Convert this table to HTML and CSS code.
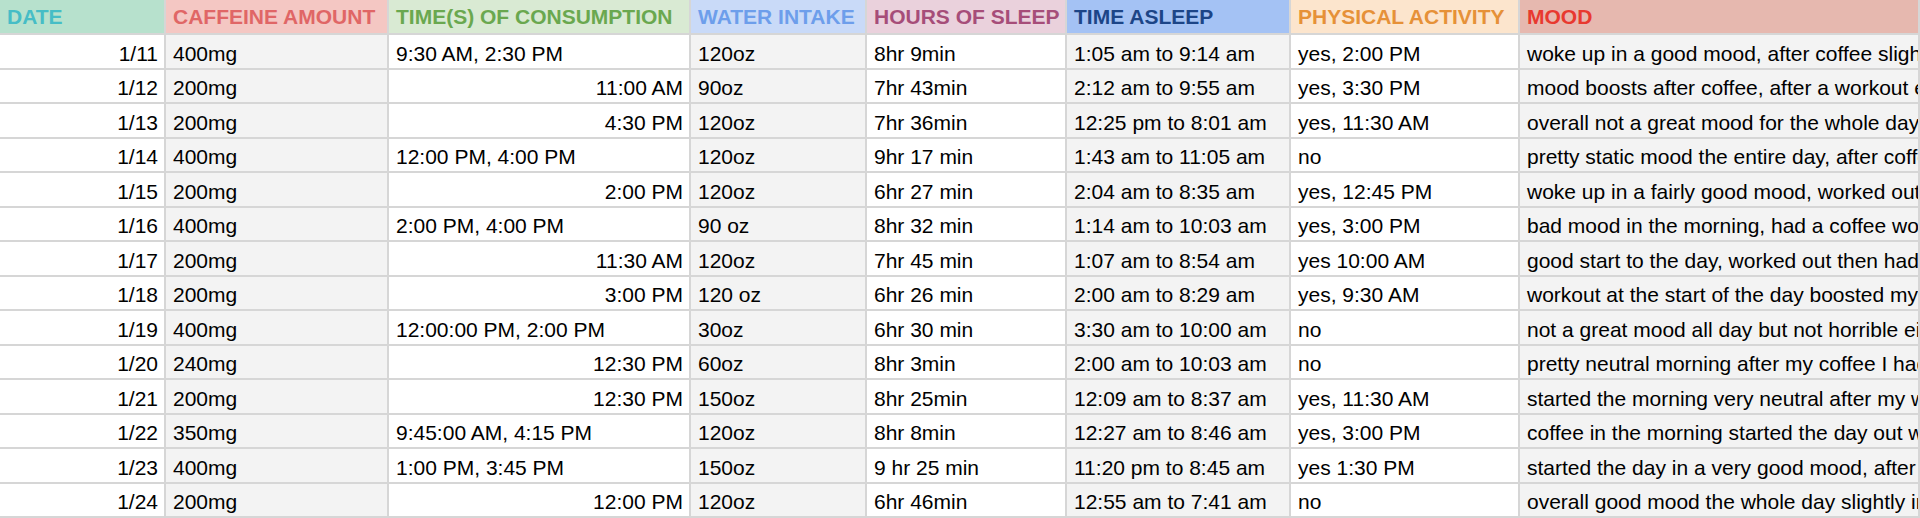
FILE: index.html
```html
<!DOCTYPE html>
<html lang="en">
<head>
<meta charset="utf-8">
<title>Caffeine Log</title>
<link rel="stylesheet" href="styles.css">
</head>
<body>
<div class="sheet">
  <div class="hd h-date">DATE</div>
  <div class="hd h-caf">CAFFEINE AMOUNT</div>
  <div class="hd h-time">TIME(S) OF CONSUMPTION</div>
  <div class="hd h-water">WATER INTAKE</div>
  <div class="hd h-hours">HOURS OF SLEEP</div>
  <div class="hd h-asleep">TIME ASLEEP</div>
  <div class="hd h-phys">PHYSICAL ACTIVITY</div>
  <div class="hd h-mood">MOOD</div>

  <div class="c r">1/11</div><div class="c g">400mg</div><div class="c">9:30 AM, 2:30 PM</div><div class="c g">120oz</div><div class="c">8hr 9min</div><div class="c g">1:05 am to 9:14 am</div><div class="c">yes, 2:00 PM</div><div class="c g">woke up in a good mood, after coffee slightly more energized</div>
  <div class="c r">1/12</div><div class="c g">200mg</div><div class="c r">11:00 AM</div><div class="c g">90oz</div><div class="c">7hr 43min</div><div class="c g">2:12 am to 9:55 am</div><div class="c">yes, 3:30 PM</div><div class="c g">mood boosts after coffee, after a workout even better</div>
  <div class="c r">1/13</div><div class="c g">200mg</div><div class="c r">4:30 PM</div><div class="c g">120oz</div><div class="c">7hr 36min</div><div class="c g">12:25 pm to 8:01 am</div><div class="c">yes, 11:30 AM</div><div class="c g">overall not a great mood for the whole day</div>
  <div class="c r">1/14</div><div class="c g">400mg</div><div class="c">12:00 PM, 4:00 PM</div><div class="c g">120oz</div><div class="c">9hr 17 min</div><div class="c g">1:43 am to 11:05 am</div><div class="c">no</div><div class="c g">pretty static mood the entire day, after coffee slightly better</div>
  <div class="c r">1/15</div><div class="c g">200mg</div><div class="c r">2:00 PM</div><div class="c g">120oz</div><div class="c">6hr 27 min</div><div class="c g">2:04 am to 8:35 am</div><div class="c">yes, 12:45 PM</div><div class="c g">woke up in a fairly good mood, worked out and felt better</div>
  <div class="c r">1/16</div><div class="c g">400mg</div><div class="c">2:00 PM, 4:00 PM</div><div class="c g">90 oz</div><div class="c">8hr 32 min</div><div class="c g">1:14 am to 10:03 am</div><div class="c">yes, 3:00 PM</div><div class="c g">bad mood in the morning, had a coffee worked out and felt better</div>
  <div class="c r">1/17</div><div class="c g">200mg</div><div class="c r">11:30 AM</div><div class="c g">120oz</div><div class="c">7hr 45 min</div><div class="c g">1:07 am to 8:54 am</div><div class="c">yes 10:00 AM</div><div class="c g">good start to the day, worked out then had a coffee</div>
  <div class="c r">1/18</div><div class="c g">200mg</div><div class="c r">3:00 PM</div><div class="c g">120 oz</div><div class="c">6hr 26 min</div><div class="c g">2:00 am to 8:29 am</div><div class="c">yes, 9:30 AM</div><div class="c g">workout at the start of the day boosted my mood</div>
  <div class="c r">1/19</div><div class="c g">400mg</div><div class="c">12:00:00 PM, 2:00 PM</div><div class="c g">30oz</div><div class="c">6hr 30 min</div><div class="c g">3:30 am to 10:00 am</div><div class="c">no</div><div class="c g">not a great mood all day but not horrible either</div>
  <div class="c r">1/20</div><div class="c g">240mg</div><div class="c r">12:30 PM</div><div class="c g">60oz</div><div class="c">8hr 3min</div><div class="c g">2:00 am to 10:03 am</div><div class="c">no</div><div class="c g">pretty neutral morning after my coffee I had more energy</div>
  <div class="c r">1/21</div><div class="c g">200mg</div><div class="c r">12:30 PM</div><div class="c g">150oz</div><div class="c">8hr 25min</div><div class="c g">12:09 am to 8:37 am</div><div class="c">yes, 11:30 AM</div><div class="c g">started the morning very neutral after my workout felt better</div>
  <div class="c r">1/22</div><div class="c g">350mg</div><div class="c">9:45:00 AM, 4:15 PM</div><div class="c g">120oz</div><div class="c">8hr 8min</div><div class="c g">12:27 am to 8:46 am</div><div class="c">yes, 3:00 PM</div><div class="c g">coffee in the morning started the day out well</div>
  <div class="c r">1/23</div><div class="c g">400mg</div><div class="c">1:00 PM, 3:45 PM</div><div class="c g">150oz</div><div class="c">9 hr 25 min</div><div class="c g">11:20 pm to 8:45 am</div><div class="c">yes 1:30 PM</div><div class="c g">started the day in a very good mood, after coffee even better</div>
  <div class="c r">1/24</div><div class="c g">200mg</div><div class="c r">12:00 PM</div><div class="c g">120oz</div><div class="c">6hr 46min</div><div class="c g">12:55 am to 7:41 am</div><div class="c">no</div><div class="c g">overall good mood the whole day slightly irritable at night</div>
</div>
</body>
</html>
```

FILE: styles.css
```css
html, body {
  margin: 0;
  padding: 0;
  background: #ffffff;
  overflow: hidden;
}

.sheet {
  display: grid;
  grid-template-columns: 166px 223px 302px 176px 200px 224px 229px 400px;
  grid-template-rows: 35px repeat(14, 34.5px);
  width: 1920px;
  font-family: "Liberation Sans", Arial, sans-serif;
  font-size: 21px;
  line-height: 24px;
  color: #000;
}

.hd, .c {
  box-sizing: border-box;
  display: flex;
  white-space: nowrap;
  overflow: hidden;
  border-right: 2px solid #d6d6d6;
  border-bottom: 2px solid #d6d6d6;
  padding: 0 6px 0 7px;
}

.hd {
  align-items: center;
  font-weight: bold;
  padding-top: 1px;
}

.c {
  align-items: flex-end;
  padding-bottom: 2px;
  background: #ffffff;
}

.c.g { background: #f3f3f3; }
.c.r { justify-content: flex-end; }

.h-date   { background: #b7e1cd; color: #46bdc6; }
.h-caf    { background: #f4c7c3; color: #e06666; }
.h-time   { background: #d9ead3; color: #6aa84f; }
.h-water  { background: #c9daf8; color: #6d9eeb; }
.h-hours  { background: #ead1dc; color: #a64d79; }
.h-asleep { background: #a4c2f4; color: #1c4587; }
.h-phys   { background: #fce5cd; color: #e69138; }
.h-mood   { background: #e6b8af; color: #e8392f; }
```
